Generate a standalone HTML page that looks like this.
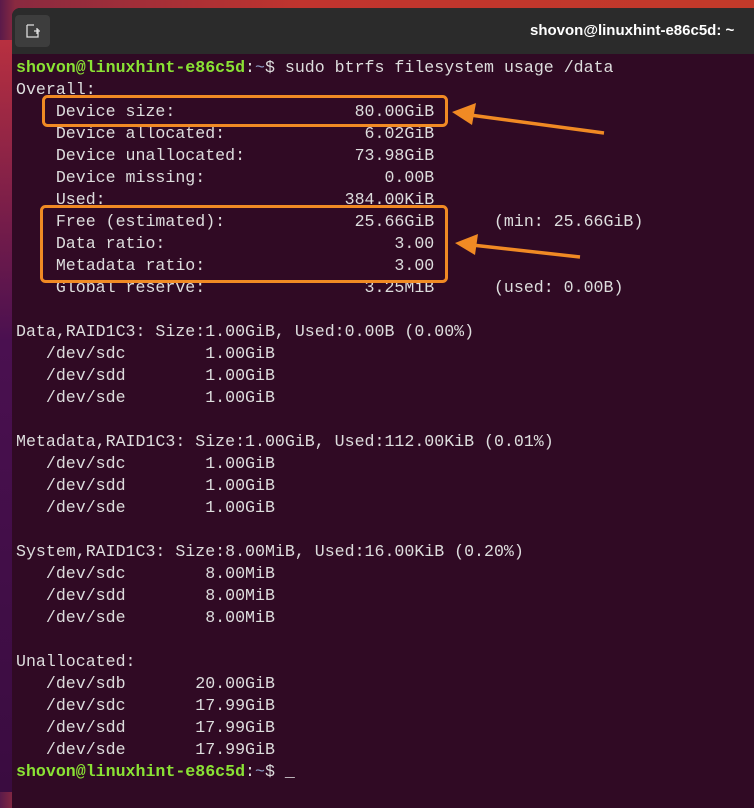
<!DOCTYPE html>
<html><head><style>
html,body{margin:0;padding:0;width:754px;height:792px;overflow:hidden;background:linear-gradient(90deg,#5a1a4a 0,#8a2a40 2%,#c0342e 40%,#c23a2a 100%);}
#bg2{position:absolute;left:0;top:40px;width:20px;height:752px;background:linear-gradient(180deg,#b83040,#4a1050 40%,#3a0c40);}
#win{position:absolute;left:12px;top:8px;width:760px;height:800px;border-radius:8px 8px 0 0;overflow:hidden;background:#300a24;}
#title{height:46px;background:#2b2b2b;position:relative;}
#btn{position:absolute;left:3px;top:7px;width:35px;height:32px;background:#3d3d3d;border-radius:4px;}
#ttext{position:absolute;left:518px;top:14px;color:#fff;font:bold 15px "Liberation Sans",sans-serif;}
pre{position:absolute;left:4px;top:49px;margin:0;font:16.6px/22px "Liberation Mono",monospace;color:#ddd;}
.g{color:#8ae234;font-weight:bold}.b{color:#8fa0c8}
svg{position:absolute;left:0;top:0}
</style></head><body>
<div id="bg2"></div>
<div id="win"><div id="title"><div id="btn"><svg width="35" height="32"><path d="M12 10v12h11V14M12 10h7M19 16h6M22 13v6" stroke="#ddd" stroke-width="1.3" fill="none"/></svg></div><div id="ttext">shovon@linuxhint-e86c5d: ~</div></div>
<pre><span class="g">shovon@linuxhint-e86c5d</span>:<span class="b">~</span>$ sudo btrfs filesystem usage /data
Overall:
    Device size:                  80.00GiB
    Device allocated:              6.02GiB
    Device unallocated:           73.98GiB
    Device missing:                  0.00B
    Used:                        384.00KiB
    Free (estimated):             25.66GiB      (min: 25.66GiB)
    Data ratio:                       3.00
    Metadata ratio:                   3.00
    Global reserve:                3.25MiB      (used: 0.00B)

Data,RAID1C3: Size:1.00GiB, Used:0.00B (0.00%)
   /dev/sdc        1.00GiB
   /dev/sdd        1.00GiB
   /dev/sde        1.00GiB

Metadata,RAID1C3: Size:1.00GiB, Used:112.00KiB (0.01%)
   /dev/sdc        1.00GiB
   /dev/sdd        1.00GiB
   /dev/sde        1.00GiB

System,RAID1C3: Size:8.00MiB, Used:16.00KiB (0.20%)
   /dev/sdc        8.00MiB
   /dev/sdd        8.00MiB
   /dev/sde        8.00MiB

Unallocated:
   /dev/sdb       20.00GiB
   /dev/sdc       17.99GiB
   /dev/sdd       17.99GiB
   /dev/sde       17.99GiB
<span class="g">shovon@linuxhint-e86c5d</span>:<span class="b">~</span>$ _</pre>
</div>
<svg width="754" height="792">
<rect x="43.5" y="96.5" width="403" height="29" rx="4" fill="none" stroke="#f08a24" stroke-width="3"/>
<rect x="41.5" y="206.5" width="405" height="75" rx="4" fill="none" stroke="#f08a24" stroke-width="3"/>
<line x1="604" y1="133" x2="470" y2="115" stroke="#f08a24" stroke-width="3.5"/>
<polygon points="452,112 476,103 472,125" fill="#f08a24"/>
<line x1="580" y1="257" x2="472" y2="245" stroke="#f08a24" stroke-width="3.5"/>
<polygon points="455,243 478,234 475,255" fill="#f08a24"/>
</svg>
</body></html>
